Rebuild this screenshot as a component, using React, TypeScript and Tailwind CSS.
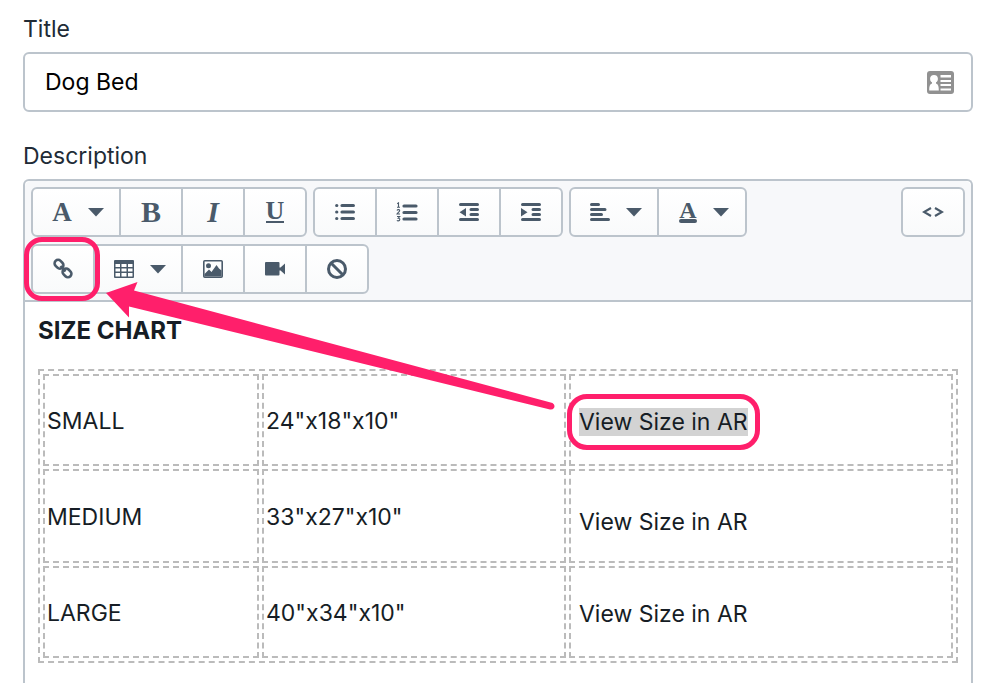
import type { ReactNode } from 'react';

const Caret = () => (
  <svg width="16" height="9" viewBox="0 0 16 9" fill="currentColor" aria-hidden="true">
    <path d="M0 0h16L8 8.5z" />
  </svg>
);

const LinkIcon = () => (
  <svg width="22" height="22" viewBox="0 0 22 22" fill="none" stroke="currentColor" strokeWidth="2.6" aria-hidden="true">
    <rect x="2.2" y="2.8" width="9.6" height="7" rx="3.5" transform="rotate(45 7 6.3)" />
    <rect x="10.2" y="11.4" width="9.6" height="7" rx="3.5" transform="rotate(45 15 14.9)" />
    <path d="M8.5 8l5 5.5" />
  </svg>
);

const TableIcon = () => (
  <svg width="20" height="18" viewBox="0 0 20 18" aria-hidden="true">
    <rect width="20" height="18" rx="1" fill="currentColor" />
    <g fill="#fff">
      <path d="M1.5 4h4.500v3H1.500zM7.500 4h5v3h-5zM14 4h4.500v3H14z" />
      <path d="M1.500 8.500H6v3H1.500zM7.500 8.500h5v3h-5zM14 8.500h4.500v3H14z" />
      <path d="M1.500 13H6v3.500H1.500zM7.500 13h5v3.500h-5zM14 13h4.500v3.500H14z" />
    </g>
  </svg>
);

const ImageIcon = () => (
  <svg width="20" height="18" viewBox="0 0 20 18" aria-hidden="true">
    <rect x="0.8" y="0.8" width="18.4" height="16.4" rx="1" fill="none" stroke="currentColor" strokeWidth="1.6" />
    <circle cx="5.500" cy="5.800" r="2.500" fill="currentColor" />
    <path d="M1.500 16.500v-2.500l4.500-4.500 2.500 2.500 5-7 2.500 3.500 2.500 2v6z" fill="currentColor" />
  </svg>
);

const VideoIcon = () => (
  <svg width="20" height="14" viewBox="0 0 20 14" fill="currentColor" aria-hidden="true">
    <rect width="14.500" height="13.500" rx="1" />
    <path d="M14 5.500h1.500L20 1.500v11l-4.500-4H14z" />
  </svg>
);

const ClearIcon = () => (
  <svg width="20" height="20" viewBox="0 0 20 20" fill="none" stroke="currentColor" strokeWidth="3" aria-hidden="true">
    <circle cx="10" cy="10" r="8.500" />
    <path d="M4 4l12 12" />
  </svg>
);

const BulletIcon = () => (
  <svg width="20" height="18" viewBox="0 0 20 18" aria-hidden="true">
    <g stroke="currentColor" strokeWidth="3.2" strokeLinecap="round">
      <path d="M7 2.500h11.400M7 9h11.400M7 15.500h11.400" />
      <path d="M1.700 2.500h.1M1.700 9h.1M1.700 15.500h.1" />
    </g>
  </svg>
);

const NumberIcon = () => (
  <svg width="22" height="20" viewBox="0 0 22 20" aria-hidden="true">
    <g stroke="currentColor" strokeWidth="3.2" strokeLinecap="round">
      <path d="M8 4h12M8 10.500h12M8 17h12" />
    </g>
    <g fill="none" stroke="currentColor" strokeWidth="1.100">
      <path d="M1.200 1.800l1.300-.9v4.300M1 5.200h3" />
      <path d="M1 8.500c.5-1.300 3-1.200 2.600.3C3.400 9.700 1.500 10.800 1 12h3" />
      <path d="M1 14.500h2.700l-1.500 1.700c2.300 0 2 2.700 0 2.700-.6 0-1-.2-1.300-.6" />
    </g>
  </svg>
);

const IndentIcon = ({ outdent = false }: { outdent?: boolean }) => (
  <svg width="20" height="18" viewBox="0 0 20 18" aria-hidden="true">
    <g stroke="currentColor" strokeWidth="3" strokeLinecap="round">
      <path d="M1.500 1.500h17M12 6.500h6.500M12 11.500h6.500M1.500 16.500h17" />
    </g>
    <path d={outdent ? 'M7 5v8.500L.5 9.200z' : 'M0 5v8.500l6.500-4.300z'} fill="currentColor" />
  </svg>
);

const AlignIcon = () => (
  <svg width="20" height="18" viewBox="0 0 20 18" aria-hidden="true">
    <g stroke="currentColor" strokeWidth="3" strokeLinecap="round">
      <path d="M1.500 1.500h7M1.500 6.500h13.500M1.500 11.500h10M1.500 16.500h17" />
    </g>
  </svg>
);

const CodeIcon = () => (
  <svg width="22" height="10" viewBox="0 0 22 10" fill="none" stroke="currentColor" strokeWidth="2.2" aria-hidden="true">
    <path d="M9 1L2 5l7 4M13 1l7 4-7 4" />
  </svg>
);

const ContactIcon = () => (
  <svg width="27" height="23" viewBox="0 0 27 23" aria-hidden="true">
    <rect width="27" height="23" rx="3" fill="#919191" />
    <g fill="#fff">
      <circle cx="7" cy="7.800" r="3.900" />
      <path d="M5 10h4v2.500c2.300.8 2.800 3 2.800 7H2.200c0-4 .5-6.200 2.800-7z" />
      <path d="M13.500 4H24v2.500H13.500zM13.500 9H24v2H13.500zM13.500 13H24v2H13.500zM13.500 17.500H24v2H13.500z" />
    </g>
  </svg>
);

const ToolGroup = ({ children }: { children: ReactNode }) => (
  <div className="flex h-[50px] divide-x-2 divide-[#bcc4cc] rounded-md border-2 border-[#bcc4cc] bg-gradient-to-b from-white to-[#f9fafb]">
    {children}
  </div>
);

type ToolProps = { label: string; menu?: boolean; children: ReactNode };

const Tool = ({ label, menu = false, children }: ToolProps) => (
  <button
    type="button"
    aria-label={label}
    className={
      menu
        ? 'box-content flex w-[82px] items-center justify-center gap-4 pl-1'
        : 'relative box-content flex w-[60px] items-center justify-center'
    }
  >
    {children}
    {menu && <Caret />}
  </button>
);

const rows = [
  { size: 'SMALL', dimensions: '24"x18"x10"', selected: true, height: 'h-[92px]', pad: 'pt-1' },
  { size: 'MEDIUM', dimensions: '33"x27"x10"', selected: false, height: 'h-[94px]', pad: 'pt-3' },
  { size: 'LARGE', dimensions: '40"x34"x10"', selected: false, height: 'h-[92px]', pad: 'pt-1' },
];

const cell = 'border-2 border-dashed border-[#bbb] px-[2px]';
const glyph = 'font-["Liberation_Serif",serif] font-bold';

const App = () => {
  return (
    <main className="flex min-h-screen flex-col bg-white pl-[23px] pr-[27px] pt-[13px] font-['Inter',sans-serif] text-[23px] leading-8 text-[#161d25]">
      <label htmlFor="title" className="block text-[#212b36]">Title</label>
      <div className="mt-[7px] flex h-[60px] items-center rounded-md border-2 border-[#bcc4cc] px-5 pr-[17px]">
        <input id="title" type="text" defaultValue="Dog Bed" className="min-w-0 flex-1 text-black outline-none" />
        <ContactIcon />
      </div>

      <p id="description" className="mt-7 text-[#212b36]">Description</p>
      <section
        aria-labelledby="description"
        className="relative mt-[7px] flex-1 rounded-t-md border-2 border-b-0 border-[#bcc4cc]"
      >
        <div className="flex flex-col gap-[7px] rounded-t-md border-b-2 border-[#bcc4cc] bg-[#f7f8fa] p-[6px] text-[#4a5a6a]">
          <div className="flex gap-[6px]">
            <ToolGroup>
              <Tool label="Formatting" menu><span className={`${glyph} text-[27px]`}>A</span></Tool>
              <Tool label="Bold"><span className={`${glyph} text-[30px]`}>B</span></Tool>
              <Tool label="Italic"><span className={`${glyph} text-[30px] italic`}>I</span></Tool>
              <Tool label="Underline"><span className={`${glyph} border-b-2 border-current text-[26px] leading-5`}>U</span></Tool>
            </ToolGroup>
            <ToolGroup>
              <Tool label="Bulleted list"><BulletIcon /></Tool>
              <Tool label="Numbered list"><NumberIcon /></Tool>
              <Tool label="Outdent"><IndentIcon outdent /></Tool>
              <Tool label="Indent"><IndentIcon /></Tool>
            </ToolGroup>
            <ToolGroup>
              <Tool label="Alignment" menu><AlignIcon /></Tool>
              <Tool label="Color" menu>
                <span className="flex flex-col">
                  <span className={`${glyph} text-[24px] leading-[18px]`}>A</span>
                  <span className="h-1 rounded-full bg-current" />
                </span>
              </Tool>
            </ToolGroup>
            <div className="ml-auto">
              <ToolGroup>
                <Tool label="Show HTML"><CodeIcon /></Tool>
              </ToolGroup>
            </div>
          </div>
          <div className="flex">
            <ToolGroup>
              <Tool label="Insert link">
                <LinkIcon />
                <span className="absolute -inset-y-[9px] -left-[9px] -right-[7px] z-10 rounded-[18px] border-5 border-[#ff1f6b]" />
              </Tool>
              <Tool label="Insert table" menu><TableIcon /></Tool>
              <Tool label="Insert image"><ImageIcon /></Tool>
              <Tool label="Insert video"><VideoIcon /></Tool>
              <Tool label="Clear formatting"><ClearIcon /></Tool>
            </ToolGroup>
          </div>
        </div>

        <div className="px-[13px] pt-[13px]">
          <h2 className="text-2xl leading-8 font-bold">SIZE CHART</h2>
          <table className="mt-[22px] w-full table-fixed border-separate border-spacing-[3px] border-2 border-dashed border-[#bbb]">
            <colgroup>
              <col className="w-[216px]" />
              <col className="w-[304px]" />
              <col />
            </colgroup>
            <tbody>
              {rows.map((row) => (
                <tr key={row.size} className={row.height}>
                  <td className={`${cell} pt-[2px]`}>{row.size}</td>
                  <td className={`${cell} pt-[2px]`}>{row.dimensions}</td>
                  <td className={`${cell} ${row.pad}`}>
                    <span className="relative ml-[6px] inline-block">
                      <span className={row.selected ? 'block bg-[#d3d3d3] leading-7' : 'block leading-7'}>View Size in AR</span>
                      {row.selected && (
                        <span className="absolute -inset-x-3 -inset-y-[14px] rounded-[20px] border-5 border-[#ff1f6b]" />
                      )}
                    </span>
                  </td>
                </tr>
              ))}
            </tbody>
          </table>
        </div>

        <svg className="pointer-events-none absolute left-0 top-0 z-20" width="540" height="240" viewBox="0 0 540 240" fill="#ff1f6b" aria-hidden="true">
          <path d="M81 112L112.500 101 109 109.500 527.500 222Q530.500 224 529 227 527.500 229 525 228.500L104 125.500 104 136.500z" />
        </svg>
      </section>
    </main>
  );
};

export default App;
